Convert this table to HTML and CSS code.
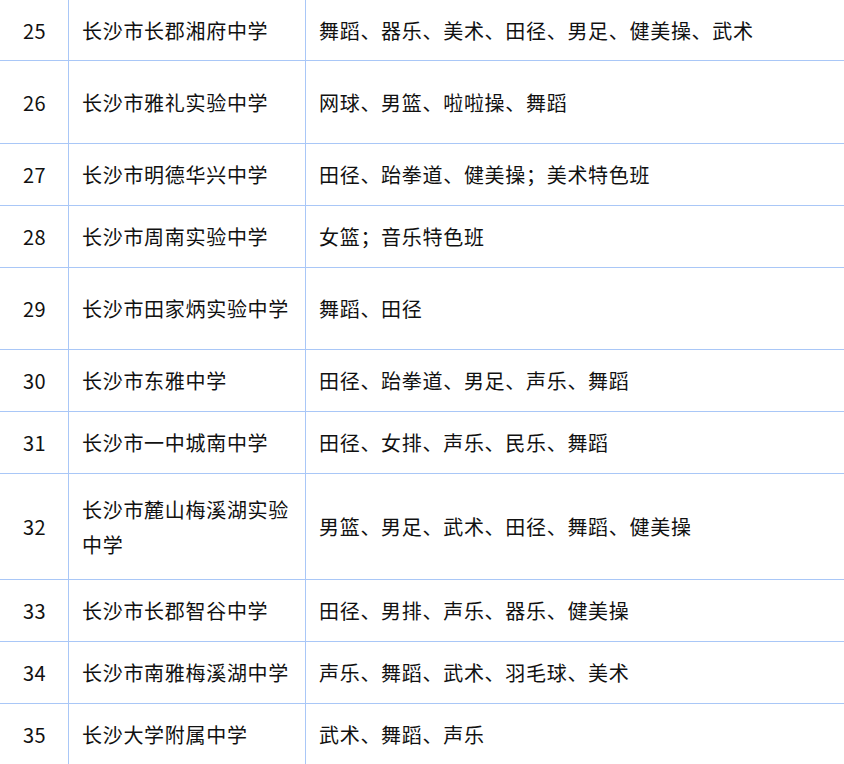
FILE: index.html
```html
<!DOCTYPE html>
<html lang="zh-CN">
<head>
<meta charset="utf-8">
<title>特色项目</title>
<link rel="stylesheet" href="styles.css">
</head>
<body>
<div class="table">
  <div class="row row-first"><div class="cell num">25</div><div class="cell name">长沙市长郡湘府中学</div><div class="cell sports">舞蹈、器乐、美术、田径、男足、健美操、武术</div></div>
  <div class="row row-tall"><div class="cell num">26</div><div class="cell name">长沙市雅礼实验中学</div><div class="cell sports">网球、男篮、啦啦操、舞蹈</div></div>
  <div class="row"><div class="cell num">27</div><div class="cell name">长沙市明德华兴中学</div><div class="cell sports">田径、跆拳道、健美操；美术特色班</div></div>
  <div class="row"><div class="cell num">28</div><div class="cell name">长沙市周南实验中学</div><div class="cell sports">女篮；音乐特色班</div></div>
  <div class="row row-tall2"><div class="cell num">29</div><div class="cell name">长沙市田家炳实验中学</div><div class="cell sports">舞蹈、田径</div></div>
  <div class="row"><div class="cell num">30</div><div class="cell name">长沙市东雅中学</div><div class="cell sports">田径、跆拳道、男足、声乐、舞蹈</div></div>
  <div class="row"><div class="cell num">31</div><div class="cell name">长沙市一中城南中学</div><div class="cell sports">田径、女排、声乐、民乐、舞蹈</div></div>
  <div class="row row-double"><div class="cell num">32</div><div class="cell name">长沙市麓山梅溪湖实验中学</div><div class="cell sports">男篮、男足、武术、田径、舞蹈、健美操</div></div>
  <div class="row"><div class="cell num">33</div><div class="cell name">长沙市长郡智谷中学</div><div class="cell sports">田径、男排、声乐、器乐、健美操</div></div>
  <div class="row"><div class="cell num">34</div><div class="cell name">长沙市南雅梅溪湖中学</div><div class="cell sports">声乐、舞蹈、武术、羽毛球、美术</div></div>
  <div class="row"><div class="cell num">35</div><div class="cell name">长沙大学附属中学</div><div class="cell sports">武术、舞蹈、声乐</div></div>
</div>
</body>
</html>
```
FILE: styles.css
```css
html, body {
  margin: 0;
  padding: 0;
  background: #ffffff;
}
body {
  font-family: "Noto Sans CJK SC", "Noto Sans", sans-serif;
  font-size: 20px;
  color: #111111;
  width: 844px;
  overflow: hidden;
}
.table {
  display: flex;
  flex-direction: column;
}
.row {
  display: grid;
  grid-template-columns: 69px 237px 1fr;
  height: 62px;
  box-sizing: border-box;
  border-bottom: 1px solid #a9c7f7;
}
.row-first { height: 61px; }
.row-tall { height: 83px; }
.row-tall2 { height: 82px; }
.row-double { height: 106px; }
.cell {
  display: flex;
  align-items: center;
  box-sizing: border-box;
  line-height: 35px;
  letter-spacing: 0.7px;
}
.num {
  justify-content: center;
  border-right: 1px solid #a9c7f7;
  letter-spacing: 0.5px;
  padding-left: 1px;
}
.name {
  padding: 0 0 0 13px;
  border-right: 1px solid #a9c7f7;
}
.sports {
  padding: 0 13px;
}
```
